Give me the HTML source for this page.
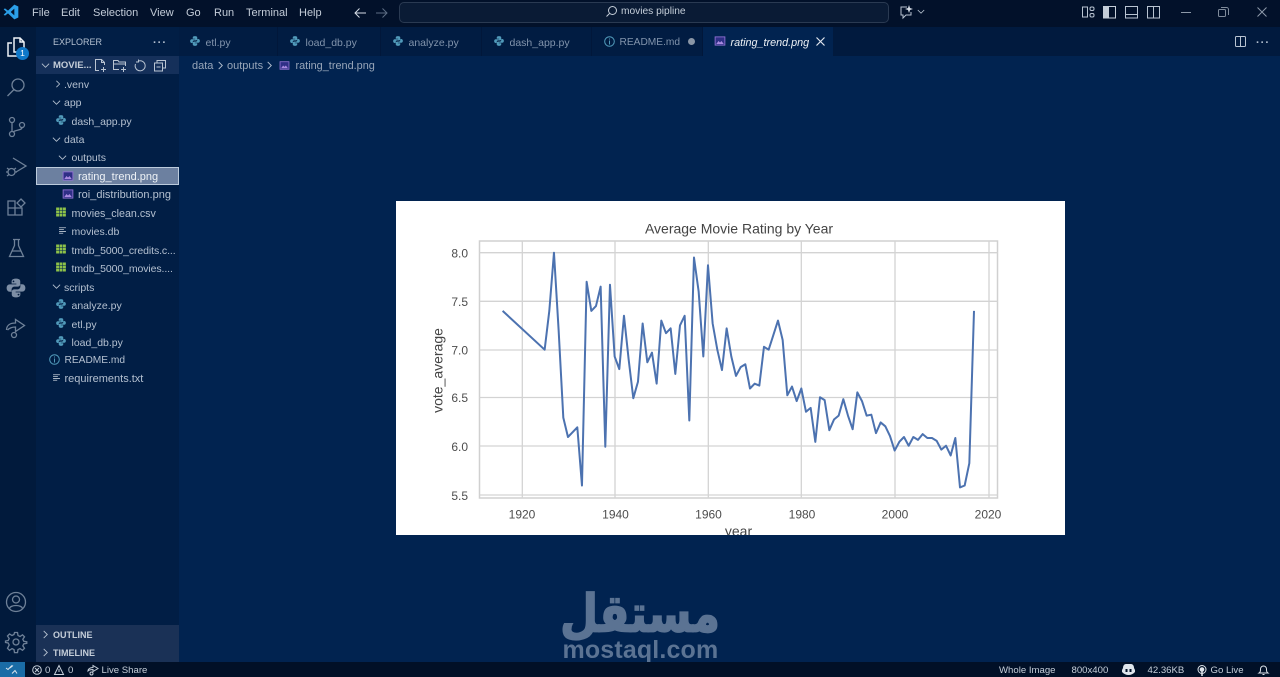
<!DOCTYPE html>
<html><head><meta charset="utf-8"><style>
html,body{margin:0;padding:0;width:1280px;height:677px;overflow:hidden;background:#012350}
body{font-family:"Liberation Sans",sans-serif;position:relative}
.a{position:absolute}
.t{position:absolute;white-space:nowrap;line-height:14px}
.m{top:6px;font-size:11px;color:#c3ccd8}
.r{font-size:10.5px;color:#b4c0d0;margin-top:1px}
.tab{position:absolute;top:27px;height:29px;background:#011c42;border-right:1px solid #01173a;box-sizing:border-box}
.tt{top:36px;font-size:10.5px;color:#8294ac}
.st{top:664px;font-size:9.6px;color:#c5ced9}
svg{position:absolute;overflow:visible}
.tk{font-size:12px;fill:#4d4d4d;font-family:"Liberation Sans",sans-serif}
</style></head><body>
<svg width="0" height="0" style="position:absolute"><defs>
<symbol id="py" viewBox="0 0 16 16"><path fill="#519aba" d="M8 1.500C5.800 1.500 5 2.300 5 3.600V5h3.300v.7H3.700C2.400 5.700 1.500 6.700 1.500 8.200s.9 2.500 2.200 2.500H5V9.200c0-1.200.9-2 2-2h2.200c1 0 1.800-.8 1.800-1.800V3.600C11 2.300 10.200 1.500 8 1.500z"/><path fill="#519aba" d="M8 14.500c2.200 0 3-.8 3-2.100V11H7.700v-.7h4.600c1.300 0 2.200-1 2.200-2.500s-.9-2.500-2.200-2.500H11v1.500c0 1.200-.9 2-2 2H6.800c-1 0-1.800.8-1.800 1.800v1.800c0 1.300.8 2.100 3 2.100z"/></symbol>
<symbol id="img" viewBox="0 0 16 16"><rect x="1.500" y="2.500" width="13" height="11" fill="#2f2f86" stroke="#8f70d0" stroke-width="1.200"/><path d="M3 12l3-4 2 2 2-2 3 4z" fill="#a98ae0"/></symbol>
<symbol id="csv" viewBox="0 0 16 16"><rect x="1.500" y="2" width="13" height="12" fill="#8dc149"/><path d="M1.500 6h13M1.500 10h13M6 2v12M10 2v12" stroke="#01234f" stroke-width=".7"/></symbol>
<symbol id="lines" viewBox="0 0 16 16"><path d="M3 4h10M3 6.700h7M3 9.400h10M3 12h6" stroke="#c2cbd6" stroke-width="1.200" fill="none"/></symbol>
<symbol id="cr" viewBox="0 0 10 10"><path d="M3 1l4 4-4 4" fill="none" stroke="#b8c4d2" stroke-width="1"/></symbol>
<symbol id="cd" viewBox="0 0 10 10"><path d="M1 3l4 4 4-4" fill="none" stroke="#b8c4d2" stroke-width="1"/></symbol>
</defs></svg>

<!-- title bar -->
<div class="a" style="left:0;top:0;width:1280px;height:27px;background:#02112a"></div>
<svg style="left:3px;top:4px" width="16" height="16" viewBox="0 0 24 24"><path fill-rule="evenodd" fill="#2b9fe8" d="M17 1 7.500 10 3 6.500 1 7.800 5.300 12 1 16.200l2 1.300 4.500-3.500 9.500 9 6-2.800V3.800zM17 7l-5.500 5 5.500 5z"/></svg>
<div class="t m" style="left:32px">File</div>
<div class="t m" style="left:61px">Edit</div>
<div class="t m" style="left:93px">Selection</div>
<div class="t m" style="left:150px">View</div>
<div class="t m" style="left:186px">Go</div>
<div class="t m" style="left:214px">Run</div>
<div class="t m" style="left:246px">Terminal</div>
<div class="t m" style="left:299px">Help</div>
<svg style="left:353px;top:6px" width="14" height="14" viewBox="0 0 14 14"><path d="M13 7H2M6.500 2.500 2 7l4.500 4.500" fill="none" stroke="#d5dce5" stroke-width="1"/></svg>
<svg style="left:375px;top:6px" width="14" height="14" viewBox="0 0 14 14"><path d="M1 7h11M7.500 2.500 12 7l-4.500 4.500" fill="none" stroke="#5d6d84" stroke-width="1"/></svg>
<div class="a" style="left:399px;top:2px;width:488px;height:19px;background:#0a1b35;border:1px solid #2a3a52;border-radius:5px"></div>
<svg style="left:605px;top:5px" width="13" height="13" viewBox="0 0 13 13"><circle cx="7.500" cy="5.500" r="4" fill="none" stroke="#c5ced9"/><path d="M4.500 8.500 1.500 11.500" stroke="#c5ced9"/></svg>
<div class="t" style="left:621px;top:5px;font-size:10.2px;color:#c5ced9">movies pipline</div>
<svg style="left:899px;top:5px" width="18" height="14" viewBox="0 0 18 14"><path d="M8 2H2v8h2v3l3-3h5V7" fill="none" stroke="#b9c4d2"/><path d="M10 0l1 3 3 1-3 1-1 3-1-3-3-1 3-1z" fill="#d6dde6"/></svg>
<svg style="left:917px;top:9px" width="8" height="6" viewBox="0 0 10 7"><path d="M1 1l4 4 4-4" fill="none" stroke="#b9c4d2"/></svg>
<svg style="left:1082px;top:6px" width="13" height="13" viewBox="0 0 13 13" fill="none" stroke="#b9c4d2"><rect x=".5" y="1" width="5" height="10"/><rect x="8" y="1" width="4" height="3.500" rx="1.500"/><rect x="8" y="7.500" width="4" height="3.500" rx="1.500"/></svg>
<svg style="left:1103px;top:6px" width="13" height="13" viewBox="0 0 13 13" fill="none" stroke="#c5ced9"><rect x=".5" y=".5" width="12" height="11.500"/><rect x=".5" y=".5" width="5" height="11.500" fill="#c5ced9"/></svg>
<svg style="left:1125px;top:6px" width="13" height="13" viewBox="0 0 13 13" fill="none" stroke="#b9c4d2"><rect x=".5" y=".5" width="12" height="11.500"/><path d="M.5 8.500h12"/></svg>
<svg style="left:1147px;top:6px" width="13" height="13" viewBox="0 0 13 13" fill="none" stroke="#b9c4d2"><rect x=".5" y=".5" width="12" height="11.500"/><path d="M6.500 .5v11.500"/></svg>
<div class="a" style="left:1181px;top:12px;width:10px;height:1px;background:#8d99a9"></div>
<svg style="left:1218px;top:7px" width="11" height="11" viewBox="0 0 11 11" fill="none" stroke="#7f8b9b"><rect x=".5" y="2.500" width="7" height="7" rx="1"/><path d="M3 .5h5.500a2 2 0 0 1 2 2V8"/></svg>
<svg style="left:1257px;top:7px" width="10" height="10" viewBox="0 0 10 10" fill="none" stroke="#8d99a9"><path d="M.5 .5l9 9M9.500 .5l-9 9"/></svg>

<!-- activity bar -->
<div class="a" style="left:0;top:27px;width:36px;height:635px;background:#011a3c"></div>
<svg style="left:5px;top:36px" width="22" height="22" viewBox="0 0 22 22" fill="none" stroke="#eef2f6" stroke-width="1.500"><path d="M9 2h6l4 4v10H9zM15 2v4h4M7 7H3v13h10v-4"/></svg>
<div class="a" style="left:16px;top:47px;width:13px;height:13px;border-radius:50%;background:#0f78c8;color:#fff;font-size:8.500px;line-height:13px;text-align:center">1</div>
<svg style="left:6px;top:77px" width="20" height="20" viewBox="0 0 20 20" fill="none" stroke="#6f8198" stroke-width="1.300"><circle cx="12" cy="8" r="6"/><path d="M8 12.500 1.500 19"/></svg>
<svg style="left:7px;top:116px" width="20" height="22" viewBox="0 0 20 22" fill="none" stroke="#6f8198" stroke-width="1.300"><circle cx="5" cy="4" r="2.500"/><circle cx="5" cy="18" r="2.500"/><circle cx="15" cy="9" r="2.500"/><path d="M5 6.500v9M15 11.500c0 3-6 2-9 4.500"/></svg>
<svg style="left:5px;top:156px" width="22" height="22" viewBox="0 0 22 22" fill="none" stroke="#6f8198" stroke-width="1.300"><path d="M8 2l13 8-10 6"/><circle cx="6.500" cy="16" r="3.500"/><path d="M1 16h2M10 16h2M2 12l2 1.500M2 20l2-1.500M11 12l-2 1.500"/></svg>
<svg style="left:6px;top:198px" width="20" height="20" viewBox="0 0 20 20" fill="none" stroke="#6f8198" stroke-width="1.300"><path d="M2 3h7v7H2zM2 10h7v7H2zM9 10h7v7H9z"/><path d="M15 1l4 4-4 4-4-4z"/></svg>
<svg style="left:8px;top:238px" width="17" height="20" viewBox="0 0 17 20" fill="none" stroke="#6f8198" stroke-width="1.300"><path d="M5 1.500h7M6.500 1.500v6L1.500 18.500h14L10.500 7.500v-6M4 13h9"/></svg>
<svg style="left:6px;top:278px" width="20" height="20" viewBox="0 0 16 16"><path fill="#7d8ea5" d="M8 .5C5.500.5 4.500 1.400 4.500 2.900V4.500h3.800v.6H3C1.500 5.100.5 6.300.5 8s1 3 2.500 3h1.500V9.200c0-1.300 1-2.300 2.300-2.300h2.600c1.100 0 2-.9 2-2V2.900C11.500 1.400 10.500.5 8 .5z"/><path fill="#7d8ea5" d="M8 15.500c2.500 0 3.500-.9 3.500-2.400v-1.600H7.700v-.6H13c1.500 0 2.500-1.200 2.500-2.900s-1-3-2.500-3h-1.500v1.800c0 1.300-1 2.300-2.300 2.300H6.600c-1.100 0-2 .9-2 2v2c0 1.500 1 2.400 3.400 2.400z"/><circle cx="6" cy="2.700" r=".7" fill="#011a3c"/><circle cx="10" cy="13.300" r=".7" fill="#011a3c"/></svg>
<svg style="left:5px;top:317px" width="22" height="22" viewBox="0 0 22 22" fill="none" stroke="#6f8198" stroke-width="1.300"><path d="M1.500 13c0-5 4-7 9-7V2.500l9 6-9 6V10c-4 0-6 1-8 3"/><circle cx="9" cy="18" r="2.500"/></svg>
<svg style="left:5px;top:591px" width="22" height="22" viewBox="0 0 22 22" fill="none" stroke="#6f8198" stroke-width="1.300"><circle cx="11" cy="11" r="9.500"/><circle cx="11" cy="8.500" r="3.500"/><path d="M4.500 17.500c1-4 12-4 13 0"/></svg>
<svg style="left:5px;top:631px" width="22" height="22" viewBox="0 0 22 22" fill="none" stroke="#6f8198" stroke-width="1.300"><circle cx="11" cy="11" r="3"/><path d="M9.500 1.500h3l.5 3 2 1 2.500-1.700 2 2-1.700 2.500 1 2 3 .5v1.500l-3 .5-1 2 1.700 2.500-2 2-2.500-1.700-2 1-.5 3h-3l-.5-3-2-1-2.500 1.700-2-2L4.200 14l-1-2-2.700-.5v-1.500l2.700-.5 1-2L2.500 5l2-2L7 4.500l2-1z"/></svg>

<!-- sidebar -->
<div class="a" style="left:36px;top:27px;width:143px;height:635px;background:#011e45"></div>
<div class="t" style="left:53px;top:35px;font-size:9px;color:#b4c0d0">EXPLORER</div>
<div class="t" style="left:153px;top:36px;font-size:11px;color:#b4c0d0;letter-spacing:1px;font-weight:bold">···</div>
<div class="a" style="left:36px;top:56px;width:143px;height:18px;background:#15305a"></div>
<svg style="left:41px;top:61px" width="9" height="9"><use href="#cd"/></svg>
<div class="t" style="left:53px;top:59px;font-size:9.500px;font-weight:bold;color:#c5ced9">MOVIE...</div>
<svg style="left:94px;top:59px" width="13" height="13" viewBox="0 0 13 13" fill="none" stroke="#b9c4d2"><path d="M5 11.500H1.500v-11h6l3 3V6M7.500 .5v3h3M9.500 8v5M7 10.500h5"/></svg>
<svg style="left:113px;top:59px" width="14" height="13" viewBox="0 0 14 13" fill="none" stroke="#b9c4d2"><path d="M6 10.500H.5v-9H5l1 1.500h6.500v4M.5 5h12M10.500 8v5M8 10.500h5"/></svg>
<svg style="left:134px;top:59px" width="12" height="13" viewBox="0 0 12 13" fill="none" stroke="#b9c4d2"><path d="M4 2.300A5 5 0 1 1 1.500 5M4.500 .5V3H2"/></svg>
<svg style="left:154px;top:60px" width="12" height="12" viewBox="0 0 12 12" fill="none" stroke="#b9c4d2"><rect x=".5" y="3" width="8" height="8"/><path d="M3 3V.5h8.500V8H8.500M2.500 7h4"/></svg>

<svg style="left:54px;top:80px" width="8" height="8" viewBox="0 0 10 10"><use href="#cr"/></svg>
<div class="t r" style="left:64px;top:77px">.venv</div>
<svg style="left:52px;top:98px" width="9" height="9" viewBox="0 0 10 10"><use href="#cd"/></svg>
<div class="t r" style="left:64px;top:95px">app</div>
<svg style="left:55px;top:114px" width="12" height="12"><use href="#py"/></svg>
<div class="t r" style="left:71.500px;top:114px">dash_app.py</div>
<svg style="left:52px;top:135px" width="9" height="9" viewBox="0 0 10 10"><use href="#cd"/></svg>
<div class="t r" style="left:64px;top:132px">data</div>
<svg style="left:58px;top:153px" width="9" height="9" viewBox="0 0 10 10"><use href="#cd"/></svg>
<div class="t r" style="left:71.500px;top:150px">outputs</div>
<div class="a" style="left:36px;top:167px;width:143px;height:18px;box-sizing:border-box;background:#6c80a0;border:1px solid #bccbdc"></div>
<svg style="left:62px;top:170px" width="12" height="12"><use href="#img"/></svg>
<div class="t r" style="left:78px;top:169px;color:#eef2f6;font-size:11px">rating_trend.png</div>
<svg style="left:62px;top:188px" width="12" height="12"><use href="#img"/></svg>
<div class="t r" style="left:78px;top:187px;font-size:11px">roi_distribution.png</div>
<svg style="left:55px;top:206px" width="12" height="12"><use href="#csv"/></svg>
<div class="t r" style="left:71.500px;top:206px;font-size:10.700px">movies_clean.csv</div>
<svg style="left:57px;top:225px" width="11" height="11"><use href="#lines"/></svg>
<div class="t r" style="left:71.500px;top:224px">movies.db</div>
<svg style="left:55px;top:243px" width="12" height="12"><use href="#csv"/></svg>
<div class="t r" style="left:71.500px;top:243px;letter-spacing:-.1px">tmdb_5000_credits.c...</div>
<svg style="left:55px;top:261px" width="12" height="12"><use href="#csv"/></svg>
<div class="t r" style="left:71.500px;top:261px;letter-spacing:-.1px">tmdb_5000_movies....</div>
<svg style="left:52px;top:282px" width="9" height="9" viewBox="0 0 10 10"><use href="#cd"/></svg>
<div class="t r" style="left:64px;top:280px">scripts</div>
<svg style="left:55px;top:298px" width="12" height="12"><use href="#py"/></svg>
<div class="t r" style="left:71.500px;top:298px">analyze.py</div>
<svg style="left:55px;top:317px" width="12" height="12"><use href="#py"/></svg>
<div class="t r" style="left:71.500px;top:317px">etl.py</div>
<svg style="left:55px;top:335px" width="12" height="12"><use href="#py"/></svg>
<div class="t r" style="left:71.500px;top:335px">load_db.py</div>
<svg style="left:49px;top:354px" width="11" height="11" viewBox="0 0 11 11" fill="none" stroke="#519aba"><circle cx="5.500" cy="5.500" r="4.800"/><path d="M5.500 4.500v4M5.500 2.500v1"/></svg>
<div class="t r" style="left:64.500px;top:353px;font-size:10.200px">README.md</div>
<svg style="left:51px;top:372px" width="11" height="11"><use href="#lines"/></svg>
<div class="t r" style="left:64.500px;top:371px;font-size:11px">requirements.txt</div>

<div class="a" style="left:36px;top:625px;width:143px;height:37px;background:#1a3156"></div>
<svg style="left:41px;top:630px" width="9" height="9"><use href="#cr"/></svg>
<div class="t" style="left:53px;top:628px;font-size:9px;font-weight:bold;color:#c5ced9">OUTLINE</div>
<svg style="left:41px;top:648px" width="9" height="9"><use href="#cr"/></svg>
<div class="t" style="left:53px;top:646px;font-size:9px;font-weight:bold;color:#c5ced9">TIMELINE</div>

<!-- tabs -->
<div class="a" style="left:179px;top:27px;width:1101px;height:29px;background:#011a3e"></div>
<div class="tab" style="left:179px;width:99px"></div>
<div class="tab" style="left:278px;width:103px"></div>
<div class="tab" style="left:381px;width:101px"></div>
<div class="tab" style="left:482px;width:110px"></div>
<div class="tab" style="left:592px;width:111px"></div>
<div class="tab" style="left:703px;width:130px;background:#012350;border:0"></div>
<svg style="left:189px;top:35px" width="12" height="12"><use href="#py"/></svg>
<div class="t tt" style="left:205.500px">etl.py</div>
<svg style="left:289px;top:35px" width="12" height="12"><use href="#py"/></svg>
<div class="t tt" style="left:305.500px">load_db.py</div>
<svg style="left:392px;top:35px" width="12" height="12"><use href="#py"/></svg>
<div class="t tt" style="left:408.500px">analyze.py</div>
<svg style="left:493px;top:35px" width="12" height="12"><use href="#py"/></svg>
<div class="t tt" style="left:509.500px">dash_app.py</div>
<svg style="left:604px;top:36px" width="11" height="11" viewBox="0 0 11 11" fill="none" stroke="#519aba"><circle cx="5.500" cy="5.500" r="4.800"/><path d="M5.500 4.500v4M5.500 2.500v1"/></svg>
<div class="t tt" style="left:619.500px;font-size:10.200px">README.md</div>
<div class="a" style="left:688px;top:38px;width:7px;height:7px;border-radius:50%;background:#8a96a6"></div>
<svg style="left:714px;top:35px" width="12" height="12"><use href="#img"/></svg>
<div class="t" style="left:730.500px;top:36px;font-size:10.800px;font-style:italic;color:#eef2f6">rating_trend.png</div>
<svg style="left:816px;top:37px" width="9" height="9" viewBox="0 0 9 9" fill="none" stroke="#e0e6ee" stroke-width="1.200"><path d="M.5 .5l8 8M8.500 .5l-8 8"/></svg>
<svg style="left:1235px;top:36px" width="11" height="11" viewBox="0 0 11 11" fill="none" stroke="#b9c4d2"><rect x=".5" y=".5" width="10" height="10" rx="1"/><path d="M5.500 .5v10"/></svg>
<div class="t" style="left:1256px;top:36px;font-size:11px;color:#b4c0d0;letter-spacing:1px;font-weight:bold">···</div>

<!-- breadcrumbs -->
<div class="t" style="left:192px;top:59px;font-size:11px;color:#98a6b9">data</div>
<svg style="left:216px;top:61px" width="9" height="9"><use href="#cr"/></svg>
<div class="t" style="left:227px;top:59px;font-size:11px;color:#98a6b9">outputs</div>
<svg style="left:265px;top:61px" width="9" height="9"><use href="#cr"/></svg>
<svg style="left:279px;top:60px" width="11" height="11"><use href="#img"/></svg>
<div class="t" style="left:295.500px;top:59px;font-size:10.900px;color:#98a6b9">rating_trend.png</div>

<!-- chart -->
<div class="a" style="left:396px;top:201px;width:669px;height:334px;background:#fff;overflow:hidden">
<svg style="left:-396px;top:-201px" width="1280" height="677" viewBox="0 0 1280 677">
<rect x="479.500" y="241" width="518" height="257" fill="#fff" stroke="#d0d0d0" stroke-width="1.500"/>
<g stroke="#d3d3d3" stroke-width="1.300" fill="none">
<path d="M522.300 241V498M615 241V498M708.300 241V498M801.300 241V498M895 241V498M989 241V498"/>
<path d="M479.500 252.700H997.500M479.500 301.300H997.500M479.500 350H997.500M479.500 397.500H997.500M479.500 446H997.500M479.500 495H997.500"/>
</g>
<polyline transform="translate(-8439.34,1028.7) scale(4.667,-97)" vector-effect="non-scaling-stroke" fill="none" stroke="#4c72b0" stroke-width="2" stroke-linejoin="round" points="1916,7.4 1925,7 1926,7.4 1927,8 1928,7.2 1929,6.3 1930,6.1 1931,6.15 1932,6.2 1933,5.6 1934,7.7 1935,7.4 1936,7.45 1937,7.65 1938,6 1939,7.67 1940,6.93 1941,6.8 1942,7.35 1943,6.9 1944,6.5 1945,6.67 1946,7.27 1947,6.87 1948,6.97 1949,6.65 1950,7.3 1951,7.17 1952,7.22 1953,6.75 1954,7.25 1955,7.35 1956,6.27 1957,7.95 1958,7.6 1959,6.93 1960,7.87 1961,7.27 1962,7 1963,6.79 1964,7.22 1965,6.93 1966,6.73 1967,6.82 1968,6.85 1969,6.6 1970,6.65 1971,6.63 1972,7.03 1973,7 1974,7.15 1975,7.3 1976,7.1 1977,6.53 1978,6.62 1979,6.47 1980,6.6 1981,6.36 1982,6.4 1983,6.05 1984,6.51 1985,6.48 1986,6.17 1987,6.28 1988,6.32 1989,6.49 1990,6.32 1991,6.18 1992,6.56 1993,6.47 1994,6.32 1995,6.33 1996,6.14 1997,6.25 1998,6.21 1999,6.11 2000,5.96 2001,6.05 2002,6.1 2003,6.01 2004,6.1 2005,6.07 2006,6.13 2007,6.09 2008,6.09 2009,6.06 2010,5.97 2011,6.01 2012,5.91 2013,6.09 2014,5.58 2015,5.6 2016,5.83 2017,7.4"/>
<g text-anchor="end">
<text class="tk" x="468" y="257.500">8.0</text><text class="tk" x="468" y="306">7.5</text><text class="tk" x="468" y="354.500">7.0</text><text class="tk" x="468" y="402">6.5</text><text class="tk" x="468" y="451">6.0</text><text class="tk" x="468" y="500">5.5</text>
</g>
<g text-anchor="middle">
<text class="tk" x="522" y="518.500">1920</text><text class="tk" x="615.500" y="518.500">1940</text><text class="tk" x="708.500" y="518.500">1960</text><text class="tk" x="802" y="518.500">1980</text><text class="tk" x="895" y="518.500">2000</text><text class="tk" x="988" y="518.500">2020</text>
<text x="739" y="233.500" font-size="14" fill="#444" font-family="Liberation Sans,sans-serif">Average Movie Rating by Year</text>
<text x="738.500" y="536" font-size="14" fill="#444" font-family="Liberation Sans,sans-serif">year</text>
<text transform="translate(442.500,370.500) rotate(-90)" font-size="14" fill="#444" font-family="Liberation Sans,sans-serif">vote_average</text>
</g>
</svg></div>

<!-- watermark -->
<div class="t" dir="rtl" style="left:540px;top:589px;width:200px;text-align:center;height:52px;line-height:52px;font-family:'DejaVu Sans',sans-serif;font-weight:bold;font-size:47px;color:#5b7393;-webkit-text-stroke:1.500px #5b7393;transform:scale(.93,1.1)">مستقل</div>
<div class="t" style="left:562.500px;top:638px;font-size:25px;line-height:24px;font-weight:bold;color:#5b7393;letter-spacing:.15px">mostaql.com</div>

<!-- status bar -->
<div class="a" style="left:0;top:662px;width:1280px;height:15px;background:#011027"></div>
<div class="a" style="left:0;top:662px;width:25px;height:15px;background:#1a6ca6"></div>
<svg style="left:6px;top:665px" width="12" height="9" viewBox="0 0 12 9" fill="none" stroke="#dfe7ef"><path d="M6 .5 2 4.500 0 3M6 8.500l3-3 2 3M7 .5 4 3"/></svg>
<svg style="left:32px;top:665px" width="10" height="10" viewBox="0 0 10 10" fill="none" stroke="#c5ced9"><circle cx="5" cy="5" r="4.300"/><path d="M3 3l4 4M7 3 3 7"/></svg>
<div class="t st" style="left:45px">0</div>
<svg style="left:54px;top:665px" width="10" height="10" viewBox="0 0 10 10" fill="none" stroke="#c5ced9"><path d="M5 .5 9.500 9.500H.5zM5 4v3"/></svg>
<div class="t st" style="left:68px">0</div>
<svg style="left:87px;top:665px" width="12" height="11" viewBox="0 0 12 11" fill="none" stroke="#c5ced9"><path d="M1 6c0-2 2-3.500 5-3.500V.5l5 3-5 3V4.500C4 4.500 2 5 1 6z"/><circle cx="4.500" cy="8.500" r="1.500"/></svg>
<div class="t st" style="left:101.500px">Live Share</div>
<div class="t st" style="left:999px">Whole Image</div>
<div class="t st" style="left:1071.500px">800x400</div>
<svg style="left:1122px;top:664px" width="13" height="11" viewBox="0 0 13 11"><path d="M1 4c0-2 1-4 3-4h5c2 0 3 2 3 4l1 2v2c-2 2-4 3-6.500 3S2 10 0 8V6z" fill="#dfe5ec"/><rect x="3.500" y="5" width="2" height="3" fill="#011027"/><rect x="7.500" y="5" width="2" height="3" fill="#011027"/></svg>
<div class="t st" style="left:1147.500px">42.36KB</div>
<svg style="left:1197px;top:665px" width="10" height="11" viewBox="0 0 10 11" fill="none" stroke="#dfe5ec"><circle cx="5" cy="4.500" r="4"/><circle cx="5" cy="4.500" r="1.800" fill="#dfe5ec"/><path d="M5 6v5" stroke-width="1.500"/></svg>
<div class="t st" style="left:1210.500px">Go Live</div>
<svg style="left:1258px;top:664px" width="11" height="12" viewBox="0 0 11 12" fill="none" stroke="#dfe5ec"><path d="M1 9c1.500-1 1.500-2 1.500-4a3 3 0 0 1 6 0c0 2 0 3 1.500 4zM4.500 10.500h2"/></svg>
</body></html>
